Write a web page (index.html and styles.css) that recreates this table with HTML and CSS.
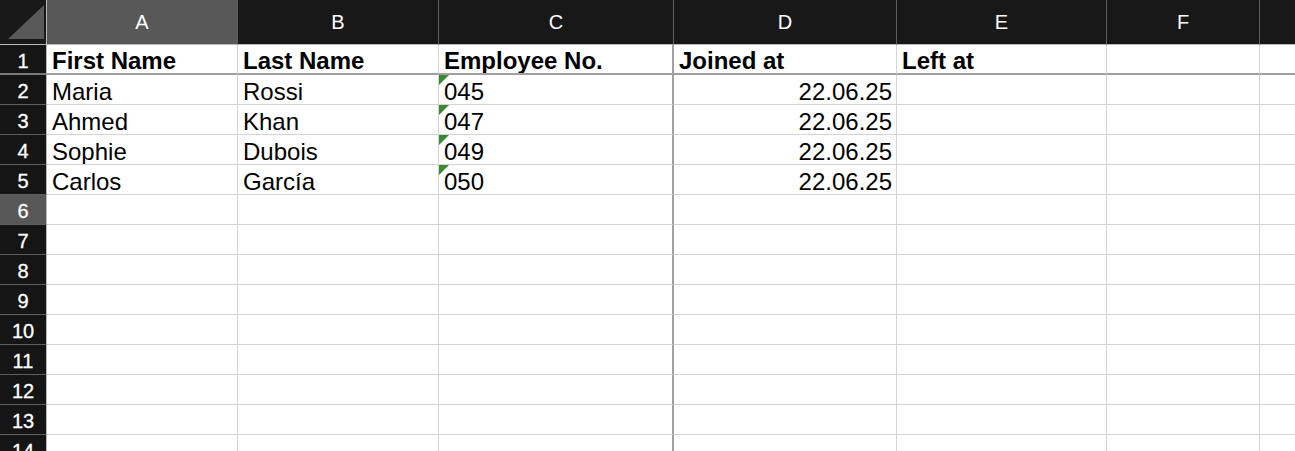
FILE: index.html
```html
<!DOCTYPE html>
<html lang="en">
<head>
<meta charset="utf-8">
<title>Employees</title>
<link rel="stylesheet" href="styles.css">
</head>
<body>
<div class="sheet">
  <div class="h corner"><svg width="46" height="44" viewBox="0 0 46 44"><polygon points="8,39 44,39 44,5" fill="#595959"/></svg></div>
  <div class="h sel">A</div>
  <div class="h">B</div>
  <div class="h">C</div>
  <div class="h">D</div>
  <div class="h">E</div>
  <div class="h">F</div>
  <div class="h last"></div>

  <div class="rh r1">1</div>
  <div class="c r1 b">First Name</div>
  <div class="c r1 b">Last Name</div>
  <div class="c r1 b cc">Employee No.</div>
  <div class="c r1 b">Joined at</div>
  <div class="c r1 b">Left at</div>
  <div class="c r1"></div>
  <div class="c r1 last"></div>

  <div class="rh">2</div>
  <div class="c">Maria</div>
  <div class="c">Rossi</div>
  <div class="c cc txt">045</div>
  <div class="c num">22.06.25</div>
  <div class="c"></div>
  <div class="c"></div>
  <div class="c last"></div>

  <div class="rh">3</div>
  <div class="c">Ahmed</div>
  <div class="c">Khan</div>
  <div class="c cc txt">047</div>
  <div class="c num">22.06.25</div>
  <div class="c"></div>
  <div class="c"></div>
  <div class="c last"></div>

  <div class="rh">4</div>
  <div class="c">Sophie</div>
  <div class="c">Dubois</div>
  <div class="c cc txt">049</div>
  <div class="c num">22.06.25</div>
  <div class="c"></div>
  <div class="c"></div>
  <div class="c last"></div>

  <div class="rh">5</div>
  <div class="c">Carlos</div>
  <div class="c">García</div>
  <div class="c cc txt">050</div>
  <div class="c num">22.06.25</div>
  <div class="c"></div>
  <div class="c"></div>
  <div class="c last"></div>

  <div class="rh sel">6</div>
  <div class="c"></div><div class="c"></div><div class="c cc"></div><div class="c"></div><div class="c"></div><div class="c"></div><div class="c last"></div>
  <div class="rh">7</div>
  <div class="c"></div><div class="c"></div><div class="c cc"></div><div class="c"></div><div class="c"></div><div class="c"></div><div class="c last"></div>
  <div class="rh">8</div>
  <div class="c"></div><div class="c"></div><div class="c cc"></div><div class="c"></div><div class="c"></div><div class="c"></div><div class="c last"></div>
  <div class="rh">9</div>
  <div class="c"></div><div class="c"></div><div class="c cc"></div><div class="c"></div><div class="c"></div><div class="c"></div><div class="c last"></div>
  <div class="rh">10</div>
  <div class="c"></div><div class="c"></div><div class="c cc"></div><div class="c"></div><div class="c"></div><div class="c"></div><div class="c last"></div>
  <div class="rh">11</div>
  <div class="c"></div><div class="c"></div><div class="c cc"></div><div class="c"></div><div class="c"></div><div class="c"></div><div class="c last"></div>
  <div class="rh">12</div>
  <div class="c"></div><div class="c"></div><div class="c cc"></div><div class="c"></div><div class="c"></div><div class="c"></div><div class="c last"></div>
  <div class="rh">13</div>
  <div class="c"></div><div class="c"></div><div class="c cc"></div><div class="c"></div><div class="c"></div><div class="c"></div><div class="c last"></div>
  <div class="rh">14</div>
  <div class="c"></div><div class="c"></div><div class="c cc"></div><div class="c"></div><div class="c"></div><div class="c"></div><div class="c last"></div>
</div>
</body>
</html>
```
FILE: styles.css
```css
* { box-sizing: border-box; }
html, body {
  margin: 0;
  padding: 0;
  background: #ffffff;
  overflow: hidden;
  height: 451px;
}
.sheet {
  display: grid;
  grid-template-columns: 47px 191px 201px 235px 223px 210px 153px 1fr;
  grid-template-rows: 45px 30px repeat(13, 30px);
  font-family: "Liberation Sans", Arial, sans-serif;
}
.h {
  background: #181818;
  color: #ffffff;
  border-right: 1px solid #5e5e5e;
  border-bottom: 1px solid #b8b8b8;
  display: flex;
  align-items: center;
  justify-content: center;
  font-size: 20px;
  padding-top: 1px;
}
.h.sel { background: #585858; }
.h.corner {
  padding: 0;
  border-right: 1px solid #b8b8b8;
  align-items: stretch;
  justify-content: stretch;
}
.h.corner svg { display: block; }
.h.last { border-right: none; }
.rh {
  background: #151515;
  color: #ffffff;
  border-right: 1px solid #b8b8b8;
  border-bottom: 1px solid #5e5e5e;
  display: flex;
  align-items: center;
  justify-content: center;
  font-size: 20px;
  padding-top: 4px;
  -webkit-text-stroke: 0.3px #ffffff;
}
.rh.sel { background: #585858; }
.rh.r1 { border-bottom: 2px solid #7a7a7a; }
.c {
  position: relative;
  border-right: 1px solid #d4d4d4;
  border-bottom: 1px solid #d4d4d4;
  display: flex;
  align-items: flex-end;
  padding: 0 4px 0 5px;
  font-size: 24px;
  line-height: 24px;
  color: #000000;
  white-space: nowrap;
  overflow: hidden;
}
.c.r1 { border-bottom: 2px solid #a0a0a0; }
.c.cc { border-right: 2px solid #a0a0a0; }
.c.last { border-right: none; }
.c.b { font-weight: bold; }
.c.num { justify-content: flex-end; }
.c.txt::before {
  content: "";
  position: absolute;
  left: 0;
  top: 0;
  width: 0;
  height: 0;
  border-top: 10px solid #3a8a34;
  border-right: 10px solid transparent;
}
```
